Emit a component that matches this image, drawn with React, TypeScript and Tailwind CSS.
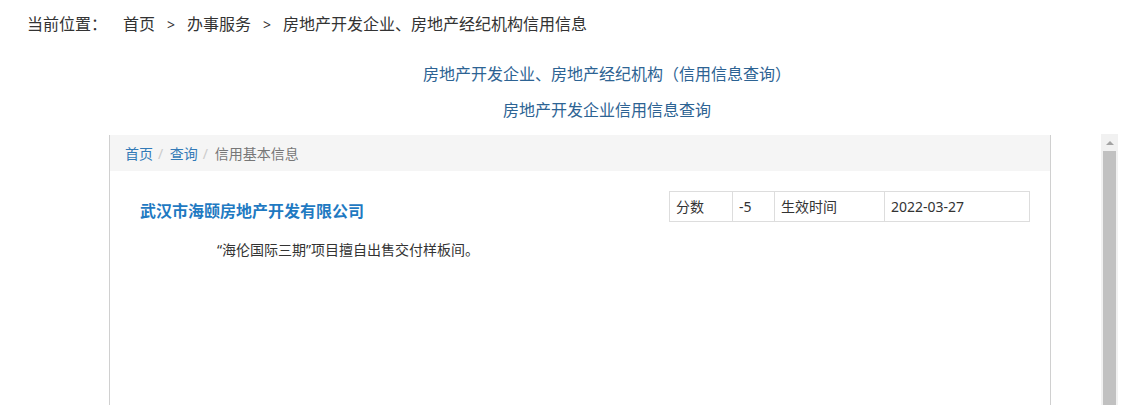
// Credit info detail page: breadcrumb, titles, framed detail panel with fake scrollbar

const font = { fontFamily: '"Noto Sans", "Noto Sans CJK SC", sans-serif' };

function Breadcrumb() {
  return (
    <div className="pl-[27px] pt-[12px] h-[48px] text-[16px] leading-[24px] text-[#333]">
      <span>当前位置：</span>
      <span className="ml-[16px]">首页</span>
      <span className="mx-[12px] text-[14px]">&gt;</span>
      <span>办事服务</span>
      <span className="mx-[12px] text-[14px]">&gt;</span>
      <span>房地产开发企业、房地产经纪机构信用信息</span>
    </div>
  );
}

function InfoTable() {
  const cell = "border border-[#ddd] h-[30px] px-[6px] text-[14px] text-[#333] whitespace-nowrap";
  return (
    <table className="border-collapse">
      <tbody>
        <tr>
          <td className={`${cell} w-[63px]`}>分数</td>
          <td className={`${cell} w-[42px]`}>-5</td>
          <td className={`${cell} w-[110px]`}>生效时间</td>
          <td className={`${cell} w-[145px]`}>2022-03-27</td>
        </tr>
      </tbody>
    </table>
  );
}

function Scrollbar() {
  return (
    <div className="w-[17px] bg-[#f1f1f1] flex flex-col">
      <div className="h-[17px] flex items-center justify-center">
        <div className="w-0 h-0 border-l-[4px] border-r-[4px] border-b-[4px] border-l-transparent border-r-transparent border-b-[#a3a3a3]" />
      </div>
      <div className="flex-1 mx-[2px] bg-[#c1c1c1]" />
    </div>
  );
}

export default function App() {
  return (
    <div className="w-[1128px] h-[405px] overflow-hidden bg-white" style={font}>
      <Breadcrumb />

      {/* Titles */}
      <div className="pl-[86px] pt-[8px] text-center text-[16px] text-[#2d6393]">
        <p className="leading-[36px]">房地产开发企业、房地产经纪机构（信用信息查询）</p>
        <p className="leading-[36px]">房地产开发企业信用信息查询</p>
      </div>

      {/* Framed panel */}
      <div className="ml-[109px] mt-[6px] w-[1009px] h-[271px] flex">
        <div className="w-[942px] mt-[1px] border-l border-r border-[#d0d0d0]">
          <div className="h-[36px] bg-[#f5f5f5] px-[15px] flex items-center text-[14px]">
            <span className="text-[#337ab7]">首页</span>
            <span className="pl-[5px] pr-[3px] text-[#ccc]">/&nbsp;</span>
            <span className="text-[#337ab7]">查询</span>
            <span className="pl-[5px] pr-[3px] text-[#ccc]">/&nbsp;</span>
            <span className="text-[#777]">信用基本信息</span>
          </div>
          <div className="flex justify-between items-start pl-[30px] pr-[20px] pt-[20px]">
            <h2 className="mt-[9px] text-[16px] leading-[22px] font-bold text-[#1f7ac2]">
              武汉市海颐房地产开发有限公司
            </h2>
            <InfoTable />
          </div>
          <p className="pl-[107px] mt-[18px] text-[14px] leading-[20px] text-[#333]">
            “海伦国际三期”项目擅自出售交付样板间。
          </p>
        </div>
        <div className="flex-1" />
        <Scrollbar />
      </div>
    </div>
  );
}
